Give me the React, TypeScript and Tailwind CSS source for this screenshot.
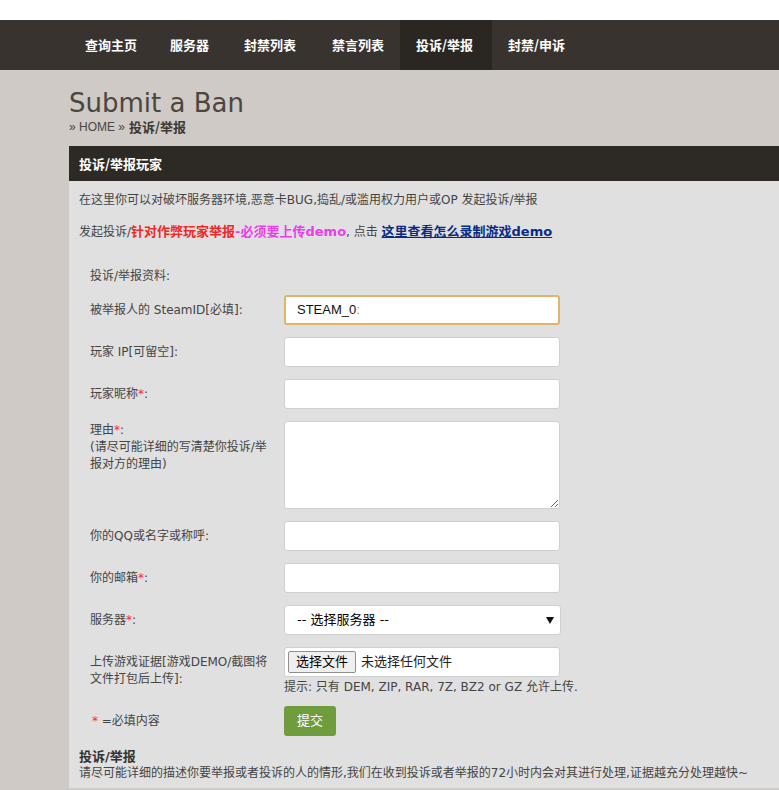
import React from "react";

const cjk = { fontFamily: '"DejaVu Sans", "Noto Sans CJK SC", sans-serif' };
const navFont = { fontFamily: '"Noto Sans CJK SC", sans-serif' };

function Star() {
  return <span className="text-[#ff1a4a]">*</span>;
}

function TextInput({ focused, value }: { focused?: boolean; value?: string }) {
  return (
    <div
      className={
        "h-[30px] w-[276px] rounded-[3px] bg-white flex items-center " +
        (focused ? "border-2 border-[#e2b465] pl-[11px]" : "border border-[#cfcfcf] pl-3")
      }
    >
      {value ? (
        <span className="text-[13px] text-[#111]" style={{ fontFamily: '"Liberation Sans", sans-serif' }}>
          STEAM_0<span className="text-[#888]">:</span>
        </span>
      ) : null}
    </div>
  );
}

export default function App() {
  const navItems = [
    { t: "查询主页", w: "w-[85px]" },
    { t: "服务器", w: "w-[74px]" },
    { t: "封禁列表", w: "w-[88px]" },
    { t: "禁言列表", w: "w-[84px]" },
    { t: "投诉/举报", w: "w-[92px]", active: true },
    { t: "封禁/申诉", w: "w-[100px]" },
  ];
  return (
    <div className="min-h-[790px] w-full bg-[#cfcac6] overflow-hidden" style={cjk}>
      <div className="h-[20px] bg-white" />
      <div className="h-[50px] bg-[#38332e] flex pl-[69px]">
        {navItems.map((n) => (
          <div
            key={n.t}
            className={
              n.w +
              " h-full flex items-center pl-4 text-[13px] font-bold text-white whitespace-nowrap " +
              (n.active ? "bg-[#2a2622]" : "")
            }
            style={navFont}
          >
            {n.t}
          </div>
        ))}
      </div>

      <div className="pl-[69px]">
        <h1
          className="pt-[16px] text-[26px] leading-[34px] text-[#4b463f]"
          style={{ fontFamily: '"DejaVu Sans", sans-serif' }}
        >
          Submit a Ban
        </h1>
        <div className="h-[14px] flex items-center text-[12px] text-[#4b463f]">
          <span style={{ fontFamily: '"Liberation Sans", sans-serif' }}>» HOME » </span>
          <span className="ml-1 font-bold text-[13px] text-[#3e3934]" style={navFont}>
            投诉/举报
          </span>
        </div>

        <div className="mt-[12px] bg-[#e0e0e0] pb-[6px]">
          <div className="h-[35px] bg-[#2d2a25] flex items-center pl-[10px] text-[13px] font-bold text-white" style={navFont}>
            投诉/举报玩家
          </div>
          <div className="px-[10px] pt-[10px] text-[12px] text-[#444]">
            <p className="leading-[18px]">
              在这里你可以对破坏服务器环境,恶意卡BUG,捣乱/或滥用权力用户或OP 发起投诉/举报
            </p>
            <p className="mt-[14px] leading-[18px] whitespace-nowrap">
              发起投诉/
              <span className="font-bold text-[13px] text-[#f02828]">针对作弊玩家举报</span>
              <span className="font-bold text-[13px] text-[#e83ee8]">-必须要上传demo</span>, 点击{" "}
              <a className="font-bold text-[13px] text-[#0a2a86] underline">这里查看怎么录制游戏demo</a>
            </p>

            <div className="pl-[11px]">
              <div className="mt-[26px] leading-[18px]">投诉/举报资料:</div>

              <div className="mt-[10px] grid grid-cols-[194px_276px] gap-y-3 items-center">
                <div>被举报人的 SteamID[必填]:</div>
                <TextInput focused value="STEAM_0:" />

                <div>玩家 IP[可留空]:</div>
                <TextInput />

                <div>
                  玩家昵称<Star />:
                </div>
                <TextInput />

                <div className="self-start pt-[1px] leading-[17px] pr-2">
                  理由<Star />:
                  <br />
                  (请尽可能详细的写清楚你投诉/举报对方的理由)
                </div>
                <textarea className="h-[88px] w-[276px] rounded-[3px] border border-[#cfcfcf] bg-white block outline-none" />

                <div>你的QQ或名字或称呼:</div>
                <TextInput />

                <div>
                  你的邮箱<Star />:
                </div>
                <TextInput />

                <div>
                  服务器<Star />:
                </div>
                <div className="h-[30px] w-[277px] rounded-[3px] border border-[#cfcfcf] bg-white flex items-center pl-3 pr-[6px] text-[13px] text-black">
                  <span className="flex-1">-- 选择服务器 --</span>
                  <svg width="8" height="7" viewBox="0 0 8 7">
                    <path d="M0 0 H8 L4 7 Z" fill="#111" />
                  </svg>
                </div>

                <div className="leading-[17px] pr-2 self-start pt-[7px]">
                  上传游戏证据[游戏DEMO/截图将文件打包后上传]:
                </div>
                <div>
                  <div className="h-[30px] w-[276px] rounded-[3px] border border-[#cfcfcf] bg-white flex items-center pl-[3px]">
                    <span className="h-[22px] px-[7px] flex items-center border border-[#8f8f8f] bg-[#efefef] rounded-[2px] text-[13px] text-black">
                      选择文件
                    </span>
                    <span className="ml-[5px] text-[13px] text-[#222]">未选择任何文件</span>
                  </div>
                  <div className="mt-[3px] leading-[14px] whitespace-nowrap">
                    提示: 只有 DEM, ZIP, RAR, 7Z, BZ2 or GZ 允许上传.
                  </div>
                </div>

                <div className="pl-[2px]">
                  <Star /> =必填内容
                </div>
                <div>
                  <button className="h-[30px] w-[52px] rounded-[3px] bg-[#6f9c3d] text-white text-[13px]">提交</button>
                </div>
              </div>
            </div>

            <div className="mt-[12px] font-bold text-[13px] leading-[17px] text-[#333]">投诉/举报</div>
            <div className="leading-[17px] whitespace-nowrap">
              请尽可能详细的描述你要举报或者投诉的人的情形,我们在收到投诉或者举报的72小时内会对其进行处理,证据越充分处理越快~
            </div>
          </div>
        </div>
      </div>
    </div>
  );
}
